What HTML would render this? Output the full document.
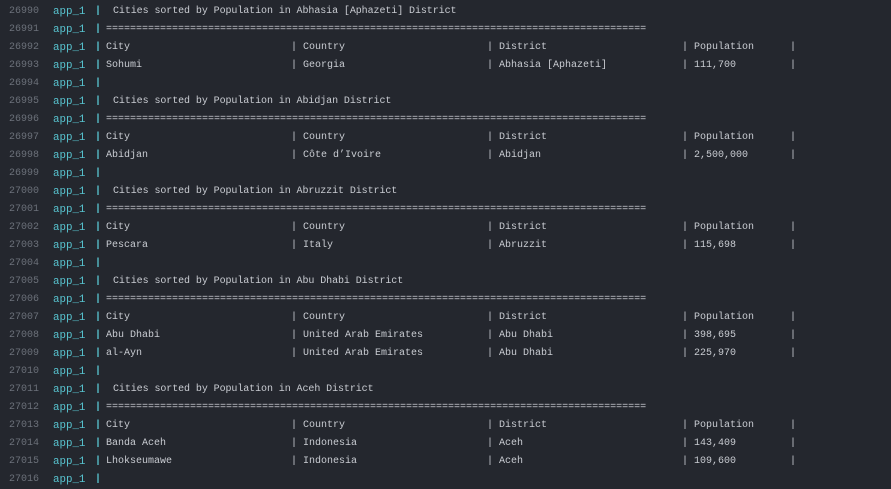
<!DOCTYPE html>
<html><head><meta charset="utf-8"><style>
html,body{margin:0;padding:0;background:#24272e;width:891px;height:488px;overflow:hidden}
.r{position:absolute;left:0;height:18px;line-height:18px;width:891px;font-family:"Liberation Mono","DejaVu Sans Mono",monospace;font-size:10px;color:#c9ccd2;white-space:pre}
.r span{position:absolute;top:0}
.n{left:9px;color:#6c717a}
.a{left:53px;color:#58c4d0;font-size:10.8px}
.p{left:95px;color:#58c4d0;font-weight:bold}
.t{left:113px;letter-spacing:-0.08px}
.c1{left:106px}.c2{left:291px}.c3{left:487px}.c4{left:682px}.c5{left:790px}
</style></head><body>
<div id="w"></div>
<script>
var L=[
["t","Cities sorted by Population in Abhasia [Aphazeti] District"],["e"],["h"],["d","Sohumi","Georgia","Abhasia [Aphazeti]","111,700"],["b"],
["t","Cities sorted by Population in Abidjan District"],["e"],["h"],["d","Abidjan","Côte d’Ivoire","Abidjan","2,500,000"],["b"],
["t","Cities sorted by Population in Abruzzit District"],["e"],["h"],["d","Pescara","Italy","Abruzzit","115,698"],["b"],
["t","Cities sorted by Population in Abu Dhabi District"],["e"],["h"],["d","Abu Dhabi","United Arab Emirates","Abu Dhabi","398,695"],["d","al-Ayn","United Arab Emirates","Abu Dhabi","225,970"],["b"],
["t","Cities sorted by Population in Aceh District"],["e"],["h"],["d","Banda Aceh","Indonesia","Aceh","143,409"],["d","Lhokseumawe","Indonesia","Aceh","109,600"],["b"]];
var h="";
function esc(s){return s.replace(/&/g,"&amp;").replace(/</g,"&lt;")}
for(var i=0;i<L.length;i++){
var l=L[i],s='<div class="r" style="top:'+(3+18*i)+'px"><span class="n">'+(26990+i)+'</span><span class="a">app_1</span><span class="p">|</span>';
if(l[0]=="t")s+='<span class="t">'+esc(l[1])+'</span>';
else if(l[0]=="e")s+='<span class="c1">'+"=".repeat(90)+'</span>';
else if(l[0]=="h"||l[0]=="d"){var v=l[0]=="h"?["City","Country","District","Population"]:l.slice(1);
s+='<span class="c1">'+esc(v[0])+'</span><span class="c2">| '+esc(v[1])+'</span><span class="c3">| '+esc(v[2])+'</span><span class="c4">| '+esc(v[3])+'</span><span class="c5">|</span>';}
s+='</div>';h+=s;}
document.getElementById("w").innerHTML=h;
</script>
</body></html>
